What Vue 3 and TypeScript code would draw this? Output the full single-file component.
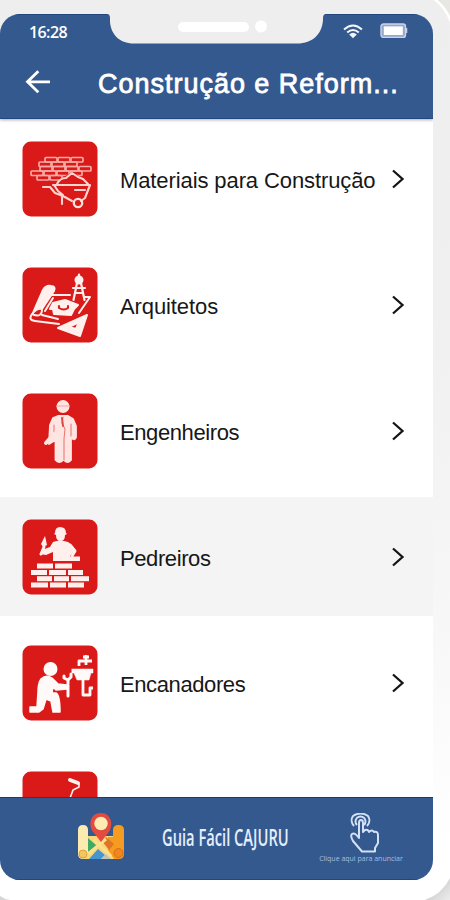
<script setup lang="ts">
interface Category {
  id: string
  label: string
  active?: boolean
}

const categories: Category[] = [
  { id: 'materials', label: 'Materiais para Construção' },
  { id: 'architects', label: 'Arquitetos' },
  { id: 'engineers', label: 'Engenheiros' },
  { id: 'masons', label: 'Pedreiros', active: true },
  { id: 'plumbers', label: 'Encanadores' },
  { id: 'painters', label: '' },
]

const brickRows = [
  { y: 16.5, xs: [23, 36, 49] },
  { y: 21, xs: [17, 30, 43] },
  { y: 25.5, xs: [18, 31, 44, 57] },
  { y: 30, xs: [9, 22, 35, 48] },
  { y: 34.5, xs: [15, 28] },
]

const wall = [
  [15, 44.5, 16], [33, 44.5, 17],
  [9, 51, 16], [27, 51, 17], [46, 51, 15],
  [15, 57.2, 15], [32, 57.2, 15], [49, 57.2, 18],
  [9, 63.5, 17], [28, 63.5, 16], [46, 63.5, 16],
]
</script>

<template>
  <div class="device">
    <svg class="shell" viewBox="0 0 450 900" fill="none">
      <defs>
        <linearGradient id="shade" gradientUnits="userSpaceOnUse" x1="436" y1="886" x2="450" y2="900">
          <stop offset="0" stop-color="#cfcfcf" />
          <stop offset="1" stop-color="#ededed" />
        </linearGradient>
      </defs>
      <path d="M436 0Q446 8 450 21V0Z" fill="#e8e7e4" />
      <path d="M433-2Q446 7 451 22" stroke="#fff" stroke-width="2.500" />
      <path d="M450 878Q442 894 425 900H450Z" fill="url(#shade)" />
      <path d="M0 896Q4 899 10 900H0Z" fill="#d5d5d5" />
    </svg>
    <main class="screen">
      <header class="top">
        <div class="status">
          <span class="clock">16:28</span>
          <div class="indicators">
            <svg class="wifi" viewBox="0 0 20 15" fill="none" stroke="#f2f5fb" stroke-width="2">
              <path d="M1 5.5Q10-2.5 19 5.5M4.2 8.5Q10 3.4 15.8 8.5" />
              <path d="M6.2 10.4Q10 7.3 13.8 10.4L10 14.3Z" fill="#f2f5fb" stroke="none" />
            </svg>
            <svg class="battery" viewBox="0 0 28 16">
              <rect x="1" y="1" width="24.5" height="13.4" rx="2.5" fill="#98a8cb" stroke="#cbd2e5" stroke-width="1.4" />
              <rect x="3.8" y="3.4" width="19" height="8.6" fill="#fff" />
              <path d="M26.5 5v5" stroke="#cbd2e5" stroke-width="1.5" />
            </svg>
          </div>
        </div>
        <div class="titlebar">
          <svg class="back" viewBox="0 0 26 24" fill="none" stroke="#fff" stroke-width="2.8">
            <path d="M13.3 1.300 2.500 11.800 13.300 22.200M2.500 11.800H25" />
          </svg>
          <h1>Construção e Reform...</h1>
        </div>
        <svg class="notch" viewBox="0 0 230 46">
          <path fill="#eee" d="M0 0H230V14H227Q224 14 224 18V20C223 34 214 43.5 198 43.5H35C20 43.5 12 34 11 22V18Q11 14 8 14H0Z" />
          <rect x="79" y="22" width="71" height="10" rx="5" fill="#fff" />
          <circle cx="162" cy="26.500" r="6" fill="#fff" />
        </svg>
      </header>

      <ul class="list">
        <li v-for="item in categories" :key="item.id" :class="['row', { active: item.active }]">
          <svg class="tile" viewBox="0 0 76 76" fill="none" stroke-linecap="round" stroke-linejoin="round">
            <rect x=".5" y=".5" width="75" height="75" rx="8.500" fill="#da1a18" />
            <g v-if="item.id === 'materials'" stroke="#f7aaa6" stroke-width="1.700">
              <template v-for="r in brickRows" :key="r.y">
                <rect v-for="x in r.xs" :key="x" :x="x" :y="r.y" width="12" height="4.500" rx="1" />
              </template>
              <path d="M31 44 40 37 50 31 60 37 68 43 65 56 58 60 42 54Z" fill="#da1a18" stroke="none" />
              <path d="M21 46H28L33 52 41 55 50 60M31 44H68L63 57 59 60M32 44 36 50 41 54M35 43Q38 37 44 37L50 32 56 36 61 38 66 43M53 49H63M40 56V63" stroke="#ffd3cf" stroke-width="2.100" />
              <circle cx="56" cy="62" r="4.200" stroke="#ffe1dd" stroke-width="2.300" />
            </g>
            <g v-else-if="item.id === 'architects'" stroke="#fff0ed" stroke-width="2">
              <path d="M21 23Q24 18 29 19Q34 19 32 24L20 42Q15 41 11 46Z" fill="#fff0ed" />
              <path d="M11 46Q5 53 13 54L37 57M20 43Q20 50 12 48M29 28H48M62 30H68L57 46M31 31 23 44M20 48 36 52" />
              <path d="M28 42 31 36 43 33 56 38 52 42 49 48 32 47 31 42Z" fill="#fff0ed" />
              <path d="M37 39V41Q42 44 46 41V39" stroke="#da1a18" stroke-width="2" />
              <circle cx="57" cy="13" r="3.500" fill="#fff0ed" />
              <path d="M57 7.500V11M55 16 51.500 33M59 16 62.500 33M53 26H61M51 21H63" stroke-width="2.200" />
              <path fill-rule="evenodd" d="M36 61 65 48 58 69ZM47 60 57 55 54 62Z" fill="#fff0ed" />
            </g>
            <g v-else-if="item.id === 'engineers'" fill="#ffe5e2" stroke="#ffe5e2">
              <circle cx="41" cy="13.500" r="6.500" stroke="none" />
              <path d="M34.500 13H47.500" stroke="#f2a19d" stroke-width="1" />
              <path d="M31 25 36 23H46L51 26 54 33V44Q53 48 50 45L49 36V67Q46 71 42 67V46L41 67Q37 71 33.500 67V47L27 51 28 32Z" stroke-width="1.800" />
              <path d="M41 24 40 30 43 36 42 46V67M32 32V42L39 35M49 31V43" stroke="#ec7975" stroke-width="1.100" fill="none" />
              <path d="M24 50 31 42 40 36" stroke-width="4" />
              <path d="M40 25 41 33" stroke="#da4b48" stroke-width="2" />
            </g>
            <g v-else-if="item.id === 'masons'" fill="#fff0ed" stroke="#fff0ed">
              <path d="M33 14Q33 8 38 8Q44 8 44 14L45 15 43 16Q43 22 38.500 22Q34 22 34 16L32 15Z" stroke="none" />
              <path d="M31 23Q38 20 46 23Q51 26 53 31L48 37V42H31V33L24 36 18 35 20 31 28 28Z" stroke="none" />
              <path d="M48 26 53 32 50 37M19 35 22 28" fill="none" stroke-width="3" />
              <path d="M19 25 23 17 25 26 21 28Z" stroke="none" />
              <rect x="44" y="37.500" width="14" height="4.500" stroke="none" />
              <rect v-for="b in wall" :key="b[0] + '-' + b[1]" :x="b[0]" :y="b[1]" :width="b[2]" height="5" stroke="none" />
            </g>
            <g v-else-if="item.id === 'plumbers'" fill="#fffaf8" stroke="#fffaf8">
              <circle cx="28.500" cy="24" r="7" stroke="none" />
              <path d="M19 34Q24 29 30 33L36 39 45 40V44L34 45 31 42 30 48 34 48Q38 50 38 67H31L29 56 24 54 21 64 17 67H8V62H15L16 47Q16 38 19 34Z" stroke-width="1.500" />
              <path d="M46 40V51M46 39V35M46 35 42 33V31M46 35 49 32V29" fill="none" stroke-width="3" />
              <path d="M50 24H71V28H69L67 35H55L52 28H50Z" stroke-width=".5" />
              <path d="M61 35V50H68V43H71M57 21V16H70M64 20V10M61 12H67" fill="none" stroke-width="2.800" stroke-linecap="butt" />
            </g>
            <g v-else stroke="#fff0ed" stroke-width="2.600">
              <path d="M48 9 56 12" stroke-width="4" />
              <path d="M57 13 57 16 51 19 47 30" stroke-width="1.600" />
            </g>
          </svg>
          <span :class="['label', item.id]">{{ item.label }}</span>
          <svg class="chevron" viewBox="0 0 14 20" fill="none" stroke="#151515" stroke-width="2.300">
            <path d="M2 1.500 11.500 10 2 18.500" />
          </svg>
        </li>
      </ul>

      <footer class="bottom">
        <svg class="map" viewBox="0 0 46 47">
          <path d="M10 23H36V46H5Z" fill="#f8d77c" />
          <path d="M0 17Q0 12 5 12Q10 12 10 17V40L5 46Q0 46 0 41Z" fill="#fcebb1" />
          <path d="M35 17Q35 12 40.500 12Q46 12 46 17V41Q46 46 41 46H36L30 37V24H35Z" fill="#f59b20" />
          <path d="M10 25 19 33 10 39Z" fill="#3faa62" />
          <path d="M11 46 20 36 27 42 23 46Z" fill="#4595d2" />
          <path d="M23 46 28 41 33 46Z" fill="#c2c2bc" />
          <path d="M24 28 28 24 36 31 31 37Z" fill="#df7524" />
          <path d="M10 41 28 26M16 27 33 43" stroke="#fbe08d" stroke-width="3" />
          <circle cx="5" cy="41" r="4" fill="#f7c55d" stroke="#d9a540" />
          <circle cx="40.500" cy="40" r="4.500" fill="#ee871e" stroke="#d86f18" />
          <path d="M23 0C11 0 10 14 16 20L23 29 30 20C36 14 34 0 23 0Z" fill="#e24b3e" />
          <circle cx="23" cy="10.500" r="6.700" fill="#ffecb5" />
        </svg>
        <div class="brand"><span>Guia Fácil CAJURU</span></div>
        <div class="advert">
          <svg class="tap" viewBox="0 0 30 41" fill="none" stroke="#d4e0f5" stroke-width="2" stroke-linejoin="round">
            <path d="M4 13A8 8 0 0 1 3 3Q11-2 18 3A8 8 0 0 1 17 13M7 12A5 5 0 1 1 14 12" stroke-width="2" />
            <path d="M9 25V10Q9 7 11 7Q13 7 13 10V19L15 17Q18 16 19 19Q22 16 24 19Q28 18 28 22V30L25 35V38.500H12L3 28Q0 23 2 21Q5 19 9 25Z" />
          </svg>
          <span>Clique aqui para anunciar</span>
        </div>
      </footer>
    </main>
  </div>
</template>

<style>
body {
  margin: 0;
  background: #eee;
}
</style>

<style scoped>
.device {
  position: relative;
  box-sizing: border-box;
  width: 450px;
  height: 900px;
  padding: 14px 17px 20px 0;
  overflow: hidden;
  background: linear-gradient(#eee 0, #f0f0f0 35%, #f6f6f6 65%, #fff 94%);
}

.shell {
  position: absolute;
  inset: 0;
  width: 450px;
  height: 900px;
}

.screen {
  position: relative;
  display: flex;
  flex-direction: column;
  height: 866px;
  overflow: hidden;
  border-radius: 20px;
  background: #fff;
  font-family: "Liberation Sans", Arial, sans-serif;
}

.top {
  position: relative;
  flex: none;
  height: 105px;
  box-sizing: border-box;
  border-top: 1px solid #23457c;
  border-bottom: 1px solid #24467f;
  background: #34598f;
  box-shadow: 0 1px 3px #aaa;
  color: #fff;
}

.notch {
  position: absolute;
  top: -15px;
  left: 99px;
  width: 230px;
  height: 46px;
}

.status {
  display: flex;
  align-items: center;
  justify-content: space-between;
  height: 34px;
  padding: 0 25px 0 29px;
}

.clock {
  font: 600 16px/20px "Open Sans", sans-serif;
  letter-spacing: -.6px;
}

.indicators {
  display: flex;
  align-items: center;
  gap: 17px;
  margin-top: -2px;
}

.wifi {
  width: 20px;
  height: 15px;
}

.battery {
  width: 28px;
  height: 16px;
}

.titlebar {
  display: flex;
  align-items: center;
  height: 66px;
  padding-left: 25px;
}

.back {
  width: 26px;
  height: 24px;
}

h1 {
  margin: 3px 0 0 47px;
  font-size: 27px;
  font-weight: 400;
  line-height: 34px;
  letter-spacing: .98px;
  white-space: nowrap;
  -webkit-text-stroke: .8px #fff;
}

.list {
  display: flex;
  flex: 1;
  flex-direction: column;
  gap: 7px;
  min-height: 0;
  margin: 0;
  padding: 0;
  overflow: hidden;
  list-style: none;
}

.row {
  display: flex;
  flex: none;
  align-items: center;
  box-sizing: border-box;
  height: 119px;
  padding: 0 28px 0 22px;
}

.row.active {
  background: #f4f4f4;
}

.tile {
  width: 76px;
  height: 76px;
  margin-right: 22px;
}

.label {
  flex: 1;
  padding-top: 5px;
  color: #171717;
  font-size: 22px;
  line-height: 28px;
  letter-spacing: -.4px;
  white-space: nowrap;
}

.label.materials,
.label.architects {
  letter-spacing: -.1px;
}

.chevron {
  width: 14px;
  height: 20px;
}

.bottom {
  display: flex;
  align-items: center;
  flex: none;
  box-sizing: border-box;
  height: 83px;
  padding: 0 30px 4px 78px;
  border-top: 1px solid #173b80;
  border-bottom: 1px solid #24467f;
  background: #34598f;
  color: #e5eefb;
}

.map {
  width: 46px;
  height: 47px;
}

.brand {
  width: 127px;
  margin-left: 38px;
}

.brand span {
  display: block;
  width: max-content;
  transform: scaleX(.612);
  transform-origin: 0 50%;
  font: 600 24px/34px "Open Sans", sans-serif;
}

.advert {
  display: flex;
  flex-direction: column;
  align-items: center;
  width: 84px;
  margin: 2px 0 0 30px;
}

.tap {
  width: 30px;
  height: 41px;
  margin-left: 8px;
}

.advert span {
  margin-top: 0;
  color: #a9bedf;
  font: 7px/9px "Open Sans", sans-serif;
  white-space: nowrap;
}
</style>
